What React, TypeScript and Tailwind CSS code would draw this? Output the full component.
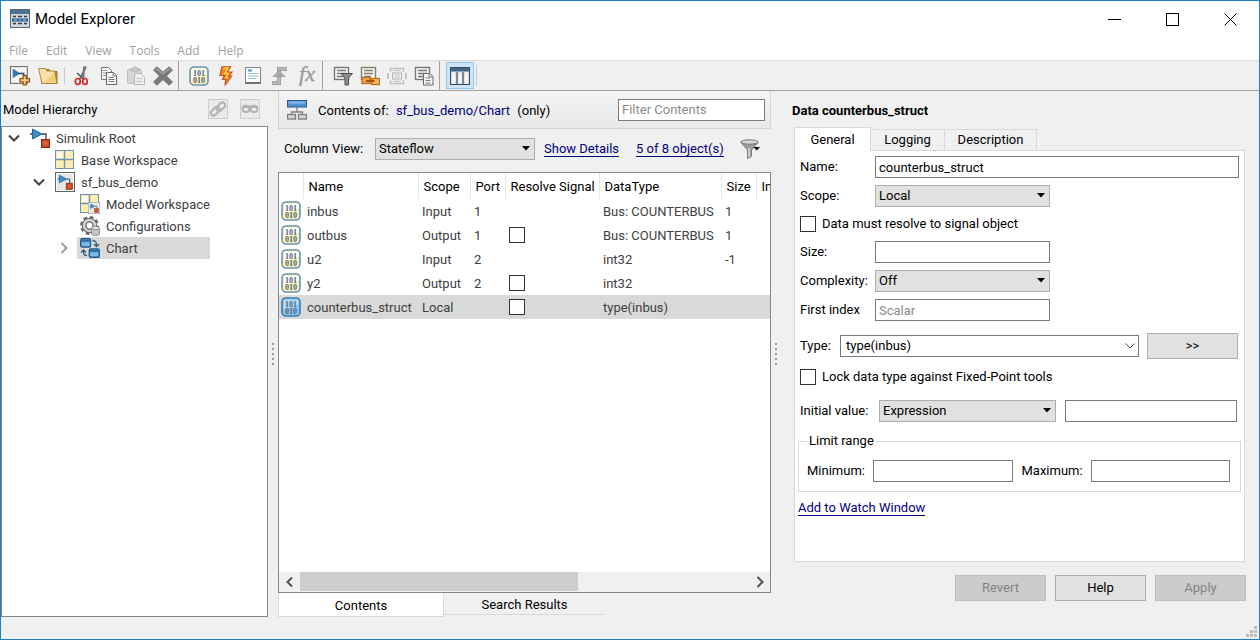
import React, { useState } from "react";

interface IconProps {
  children: React.ReactNode;
  size?: number;
}

const Icon: React.FC<IconProps> = ({ children, size = 20 }) => (
  <svg width={size} height={size} viewBox="0 0 20 20" fill="none" aria-hidden="true" className="shrink-0">
    {children}
  </svg>
);

// Blue gain triangle wired to a red block, shared by all the model icons
const ModelMark = () => (
  <>
    <path d="M0 6h3M12 6h4v6" stroke="#2b4a63" strokeWidth="1.3" />
    <path d="M2.5 1v10L12 6z" fill="#3b8fd0" stroke="#1d5787" strokeWidth="0.9" />
    <rect x="11.5" y="11.5" width="8" height="8" fill="#cc4524" stroke="#8c2c14" />
    <rect x="13.5" y="13.5" width="4" height="4" fill="#e0603a" />
  </>
);

const BoxedModelMark = () => (
  <>
    <rect x="0.5" y="0.5" width="19" height="19" fill="#e6e6e6" stroke="#5f6468" />
    <rect x="1.5" y="1.5" width="17" height="17" stroke="#fafafa" />
    <g transform="translate(2.5 2.5) scale(0.76)">
      <ModelMark />
    </g>
  </>
);

const WorkspaceMark = () => (
  <>
    <rect x="0.5" y="0.5" width="18" height="18" fill="#fbeeb0" stroke="#6f93b4" />
    <path d="M2 2h6v6H2z" fill="#fffbe6" />
    <path d="M9.5 1v17M1 9.5h17" stroke="#6f93b4" strokeWidth="1.4" />
  </>
);

const DataIcon: React.FC<{ selected?: boolean }> = ({ selected }) => (
  <Icon>
    <rect x="1" y="1" width="18" height="18" rx="4" fill={selected ? "#8cc4e8" : "#fbf0b4"} stroke={selected ? "#3b7db2" : "#6c93b8"} strokeWidth="1.6" />
    <path d="M2.500 4.500q0-2 2-2h11q2 0 2 2v3l-15 5z" fill={selected ? "#b4dcf3" : "#fffef8"} />
    <text x="10" y="9.500" textAnchor="middle" fontFamily="Liberation Serif, serif" fontWeight="700" fontSize="8" fill="#4d6780">101</text>
    <text x="10" y="16.500" textAnchor="middle" fontFamily="Liberation Serif, serif" fontWeight="700" fontSize="8" fill="#4d6780">010</text>
  </Icon>
);

const AppIcon = () => (
  <Icon>
    <rect x="0.5" y="0.5" width="19" height="18" fill="#cfd6dc" stroke="#5b6670" />
    <rect x="1" y="1" width="18" height="4" fill="#4f7396" />
    <path d="M3 7.5h3M8 7.5h4M14 7.5h3M3 14.5h3M8 14.5h4M14 14.5h3" stroke="#333b42" strokeWidth="1.6" />
    <rect x="2" y="9.5" width="16" height="3" fill="#2f5f93" />
    <path d="M4 11h3M9 11h2M13 11h3" stroke="#a9d0f2" strokeWidth="1" />
  </Icon>
);

const NewModelIcon = () => (
  <Icon size={21}>
    <rect x="0.5" y="1.5" width="16" height="16" fill="#f5f5f5" stroke="#6b6b6b" />
    <path d="M3 4v8l6-4z" fill="#2f7fbf" stroke="#1d5787" strokeWidth="0.6" />
    <path d="M8 8h5v4" stroke="#2b4a63" strokeWidth="1.4" />
    <path d="M12.500 10h3v3h3v3h-3v3h-3v-3h-3v-3h3z" fill="#f8d08c" stroke="#8f5218" strokeWidth="1.200" />
  </Icon>
);

const FolderIcon = () => (
  <Icon>
    <path d="M4 17.500V5.500l1-2h6l1.500 2h6.500v12z" fill="#c7994a" stroke="#8a6526" strokeWidth="0.9" />
    <path d="M4 17.500L0.600 2.500h7l1.200 2.500h7.700l2.500 12.500z" fill="#fae2a4" stroke="#a97b2a" strokeWidth="0.9" />
    <path d="M6 16.500l10-9.500 2 9.500z" fill="#f3cd78" />
  </Icon>
);

const CutIcon = () => (
  <Icon>
    <path d="M14 .5L8 13M12 .5L11.500 12" stroke="#75797d" strokeWidth="2" />
    <path d="M5 7l7 6.500" stroke="#55595d" strokeWidth="1.600" />
    <ellipse cx="5.800" cy="15.500" rx="2.500" ry="3" stroke="#cf2a2a" strokeWidth="1.700" />
    <ellipse cx="13" cy="15.500" rx="2.300" ry="3" stroke="#cf2a2a" strokeWidth="1.700" />
  </Icon>
);

const CopyIcon = () => (
  <Icon>
    <path d="M2.500 1.500h7l3 3v9h-10z" fill="#f4f4f4" stroke="#777" />
    <path d="M4 4.500h4M4 7h6M4 9.500h6" stroke="#999" />
    <path d="M7.500 6.500h7l3 3v9h-10z" fill="#fafafa" stroke="#666" />
    <path d="M14 6.500V10h3.500M9.500 11.500h5M9.500 13.500h6M9.500 15.500h6" stroke="#777" />
  </Icon>
);

const PasteIcon = () => (
  <Icon>
    <rect x="1.500" y="3.500" width="14" height="14" rx="1" fill="#d6d6d6" stroke="#bcbcbc" />
    <path d="M5 5V2.500h2L8 1h2l1 1.500h2V5z" fill="#c9c9c9" stroke="#b2b2b2" />
    <path d="M8.500 7.500h6l4 3.500v7.500h-10z" fill="#f0f0f0" stroke="#b5b5b5" />
    <path d="M10.500 12.500h6M10.500 15.500h6" stroke="#c4c4c4" />
  </Icon>
);

const DeleteIcon = () => (
  <Icon>
    <path d="M0.500 4L4 .8l6 5.400L16 .8 19.500 4l-6 6 6 6-3.500 3.200-6-5.600-6 5.600L.5 16l6-6z" fill="#77797b" stroke="#5c5e60" strokeWidth="0.7" />
    <path d="M2.500 4L4 2.700l6 5.300 6-5.300L17.500 4" stroke="#a5a8aa" strokeWidth="1.200" />
  </Icon>
);

const EventIcon = () => (
  <Icon>
    <path d="M6 .8h8.500l-3 5.200H16l-3 4h2.500L9 19.500l.8-6H6.500L8.500 9.500H4z" fill="#f48b22" stroke="#cf4b1e" strokeWidth="1.200" />
    <path d="M7.500 2h4.500l-3 5.500h3.500l-2.500 4h2" stroke="#fdd04e" strokeWidth="1.500" />
  </Icon>
);

const MessageIcon = () => (
  <Icon>
    <rect x="2.500" y="1.500" width="15" height="15" fill="#fbfbfb" stroke="#86898c" />
    <path d="M2 17h16" stroke="#707477" strokeWidth="2" />
    <path d="M5 4.500h4" stroke="#2f9bd6" strokeWidth="1.800" />
    <path d="M5 7.500h10M5 10h10M5 12.500h8" stroke="#8bc0df" strokeWidth="1.200" />
  </Icon>
);

const TriggerIcon = () => (
  <Icon>
    <path d="M2 17h7V3h8" stroke="#9f9f9f" strokeWidth="4" />
    <path d="M2 17h7V3h8" stroke="#b9b9b9" strokeWidth="2" />
    <path d="M9 4.500L3 10.500h12z" fill="#a9a9a9" stroke="#999" strokeWidth="0.800" />
  </Icon>
);

const FxIcon = () => (
  <Icon>
    <text x="10" y="15" textAnchor="middle" fontFamily="Liberation Serif, serif" fontStyle="italic" fontSize="22" fill="#9c9c9c" stroke="#9c9c9c" strokeWidth="0.400">fx</text>
  </Icon>
);

const SheetLines = ({ stroke }: { stroke: string }) => (
  <>
    <rect x="1.500" y="1.500" width="14" height="12" fill="#f7f7f7" stroke={stroke} strokeWidth="1.400" />
    <path d="M4 4.500h9M4 7.500h9M4 10.500h7" stroke={stroke} strokeWidth="1.400" />
  </>
);

const FilterRowsIcon = () => (
  <Icon>
    <SheetLines stroke="#777" />
    <path d="M8 7.500h11.500L15.500 12v7h-3.500v-7z" fill="#8c8f91" stroke="#4c4f51" />
  </Icon>
);

const LinkedRowsIcon = () => (
  <Icon>
    <SheetLines stroke="#887c6c" />
    <rect x="2" y="11.500" width="8" height="6" fill="#f0a44a" stroke="#bf6d17" strokeWidth="1.300" />
    <rect x="11.500" y="12.500" width="8" height="6" fill="#f6b765" stroke="#bf6d17" strokeWidth="1.300" />
    <path d="M6 15h8.500" stroke="#94500d" strokeWidth="1.800" />
  </Icon>
);

const RefreshRowsIcon = () => (
  <Icon>
    <path d="M3.500 6V2.500h13V6M3.500 14v3.500h13V14" stroke="#c0c0c0" strokeWidth="1.400" />
    <rect x="5.500" y="7" width="9" height="6" fill="#f4f4f4" stroke="#b4b4b4" />
    <path d="M7 9h6M7 11h6M6 4.700h8M6 15.300h8" stroke="#c4c4c4" />
    <path d="M1 7v6M19 7v6" stroke="#b9b9b9" strokeWidth="1.600" />
  </Icon>
);

const CopyRowsIcon = () => (
  <Icon>
    <SheetLines stroke="#777" />
    <path d="M9.500 7.500h6l3.500 3v8.500H9.500z" fill="#fbfbfb" stroke="#686868" />
    <path d="M11.500 12h5M11.500 14.500h5M11.500 17h5M15 7.500v3.500h4" stroke="#777" />
  </Icon>
);

const DialogViewIcon = () => (
  <Icon>
    <rect x="0.500" y="1.500" width="19" height="17" fill="#dfe3e6" stroke="#3d4b57" />
    <rect x="1" y="2" width="18" height="3.500" fill="#3f678f" />
    <path d="M7 6v12M13 6v12" stroke="#56626d" strokeWidth="1.400" />
    <path d="M2.500 7h2.500v10H2.500zM9 7h2.500v10H9zM15 7h2.500v10H15z" fill="#f6f8fa" />
  </Icon>
);

const LinkIcon = () => (
  <Icon size={18}>
    <g transform="rotate(-45 10 10)" stroke="#b4b4b4" strokeWidth="2.400">
      <rect x="0.500" y="6.500" width="11" height="6" rx="3" />
      <rect x="8.500" y="7.500" width="11" height="6" rx="3" />
    </g>
  </Icon>
);

const MaskIcon = () => (
  <Icon size={18}>
    <path d="M0.500 9.500c0-4.500 4-5.500 9.500-3C15.500 4 19.500 5 19.500 9.500c0 5.500-6.500 6.500-9.500 3C7 16 .5 15 .5 9.500z" fill="#b2b2b2" />
    <ellipse cx="5.500" cy="10.300" rx="2.800" ry="1.800" fill="#efefef" />
    <ellipse cx="14.500" cy="10.300" rx="2.800" ry="1.800" fill="#efefef" />
  </Icon>
);

const HierarchyIcon = () => (
  <Icon>
    <rect x="0.500" y="0.500" width="19" height="6.500" fill="#4a92d0" stroke="#2b5f90" />
    <rect x="1.500" y="1.500" width="17" height="2" fill="#86bde8" />
    <path d="M10 7v5M4.500 15v-3h11v3" stroke="#808080" strokeWidth="1.300" />
    <rect x="0.500" y="14.500" width="8" height="4.500" fill="#d6d6d6" stroke="#7b7b7b" strokeWidth="1.300" />
    <rect x="11.500" y="14.500" width="8" height="4.500" fill="#d6d6d6" stroke="#7b7b7b" strokeWidth="1.300" />
  </Icon>
);

const FunnelIcon = () => (
  <Icon>
    <path d="M1 3.500l6.500 7.500v8.500l4-2V11L18 3.500z" fill="#9c9c9c" stroke="#7c7c7c" />
    <path d="M9 9v9" stroke="#e0e0e0" strokeWidth="1.500" />
    <ellipse cx="9.500" cy="3" rx="8.700" ry="2.200" fill="#d4d4d4" stroke="#777" />
    <path d="M13.500 8h6.500l-3.250 3.500z" fill="#000" />
  </Icon>
);

const GearIcon = () => (
  <Icon>
    <circle cx="9.500" cy="9.500" r="7.700" stroke="#6a6a6a" strokeWidth="3.400" strokeDasharray="3.400 2.650" />
    <circle cx="9.500" cy="9.500" r="5.300" stroke="#666" strokeWidth="4.800" />
    <circle cx="9.500" cy="9.500" r="5.500" stroke="#d2d2d2" strokeWidth="2.600" />
    <path d="M11.500 12v6c0 2 8 2 8 0v-6z" fill="#c5c5c5" stroke="#808080" strokeWidth="0.800" />
    <ellipse cx="15.500" cy="12" rx="4" ry="1.600" fill="#e9e9e9" stroke="#808080" strokeWidth="0.800" />
  </Icon>
);

const ChartIcon = () => (
  <Icon>
    <rect x="0.700" y="0.700" width="9.800" height="8.300" rx="1.500" fill="#78b8ea" stroke="#235884" strokeWidth="1.400" />
    <path d="M1.500 2.800h8.200" stroke="#2b6ba3" strokeWidth="2" />
    <rect x="9.300" y="11" width="10" height="8.300" rx="1.500" fill="#78b8ea" stroke="#235884" strokeWidth="1.400" />
    <path d="M10.200 13.100h8.200" stroke="#2b6ba3" strokeWidth="2" />
    <path d="M12.500 2.500c3 0 4 1 4 5M14 6l2.500 2.500L19 6M7 17.500c-3 0-3.500-1-3.500-5M1 14.500L3.500 12 6 14.500" stroke="#3b5a77" strokeWidth="1.400" />
  </Icon>
);

const Chevron: React.FC<{ dir: "down" | "right" | "left" }> = ({ dir }) => (
  <svg width="12" height="12" viewBox="0 0 12 12" fill="none" stroke="currentColor" strokeWidth="2" aria-hidden="true">
    {dir === "down" && <path d="M1 3.500l5 5 5-5" />}
    {dir === "right" && <path d="M3.500 1l5 5-5 5" />}
    {dir === "left" && <path d="M8 1.500L3.500 6 8 10.500" />}
  </svg>
);

const menus = ["File", "Edit", "View", "Tools", "Add", "Help"];

interface Tool {
  label: string;
  icon: React.ReactNode;
}

const fileTools: Tool[] = [
  { label: "New model", icon: <NewModelIcon /> },
  { label: "Open", icon: <FolderIcon /> },
];

const editTools: Tool[] = [
  { label: "Cut", icon: <CutIcon /> },
  { label: "Copy", icon: <CopyIcon /> },
  { label: "Paste", icon: <PasteIcon /> },
  { label: "Delete", icon: <DeleteIcon /> },
];

const addTools: Tool[] = [
  { label: "Add data", icon: <DataIcon /> },
  { label: "Add event", icon: <EventIcon /> },
  { label: "Add message", icon: <MessageIcon /> },
  { label: "Add trigger", icon: <TriggerIcon /> },
  { label: "Add function", icon: <FxIcon /> },
];

const viewTools: Tool[] = [
  { label: "Filter rows", icon: <FilterRowsIcon /> },
  { label: "Show linked rows", icon: <LinkedRowsIcon /> },
  { label: "Refresh rows", icon: <RefreshRowsIcon /> },
  { label: "Copy rows", icon: <CopyRowsIcon /> },
];

const ToolGroup: React.FC<{ tools: Tool[] }> = ({ tools }) => (
  <div className="flex items-center">
    {tools.map((tool) => (
      <button key={tool.label} type="button" aria-label={tool.label} className="flex h-7 w-[27px] items-center justify-center">
        {tool.icon}
      </button>
    ))}
  </div>
);

interface TreeItem {
  label: string;
  indent: string;
  icon: React.ReactNode;
  state?: "open" | "closed";
  selected?: boolean;
}

const treeItems: TreeItem[] = [
  { label: "Simulink Root", indent: "", icon: <Icon><ModelMark /></Icon>, state: "open" },
  { label: "Base Workspace", indent: "pl-[25px]", icon: <Icon><WorkspaceMark /></Icon> },
  { label: "sf_bus_demo", indent: "pl-[25px]", icon: <Icon><BoxedModelMark /></Icon>, state: "open" },
  {
    label: "Model Workspace",
    indent: "pl-[50px]",
    icon: (
      <Icon>
        <WorkspaceMark />
        <g transform="translate(8 8) scale(0.6)">
          <BoxedModelMark />
        </g>
      </Icon>
    ),
  },
  { label: "Configurations", indent: "pl-[50px]", icon: <GearIcon /> },
  { label: "Chart", indent: "pl-[50px]", icon: <ChartIcon />, state: "closed", selected: true },
];

interface DataRow {
  name: string;
  scope: string;
  port: string;
  resolve: boolean;
  dataType: string;
  size: string;
}

const rows: DataRow[] = [
  { name: "inbus", scope: "Input", port: "1", resolve: false, dataType: "Bus: COUNTERBUS", size: "1" },
  { name: "outbus", scope: "Output", port: "1", resolve: true, dataType: "Bus: COUNTERBUS", size: "1" },
  { name: "u2", scope: "Input", port: "2", resolve: false, dataType: "int32", size: "-1" },
  { name: "y2", scope: "Output", port: "2", resolve: true, dataType: "int32", size: "" },
  { name: "counterbus_struct", scope: "Local", port: "", resolve: true, dataType: "type(inbus)", size: "" },
];

const columns = [
  { label: "", width: "w-6" },
  { label: "Name", width: "w-[115px]" },
  { label: "Scope", width: "w-[52px]" },
  { label: "Port", width: "w-[35px]" },
  { label: "Resolve Signal", width: "w-[94px]" },
  { label: "DataType", width: "w-[122px]" },
  { label: "Size", width: "w-[35px]" },
  { label: "InitialValue", width: "w-[120px]" },
];

const checkboxClass = "size-4 shrink-0 appearance-none border border-[#333] bg-white checked:bg-[#333]";
const inputClass = "h-[22px] min-w-0 border border-[#7a7a7a] bg-white px-[3px] outline-none placeholder:text-[#8c8c8c]";
const buttonClass = "h-[26px] w-[91px] shrink-0 border border-[#adadad] bg-[#e1e1e1] disabled:border-[#bfbfbf] disabled:bg-[#cccccc] disabled:text-[#838383]";
const linkClass = "border-b border-[#00007f] leading-[15px] text-[#00007f]";
const cellClass = "p-0 pt-0.5 pl-1 whitespace-nowrap";

interface DropdownProps {
  id: string;
  options: string[];
  className: string;
}

const Dropdown: React.FC<DropdownProps> = ({ id, options, className }) => (
  <div className={`relative ${className}`}>
    <select id={id} className="block h-[22px] w-full appearance-none border border-[#adadad] bg-[#e1e1e1] px-[3px] outline-none">
      {options.map((option) => (
        <option key={option}>{option}</option>
      ))}
    </select>
    <svg width="8" height="5" viewBox="0 0 8 5" aria-hidden="true" className="pointer-events-none absolute top-2 right-[5px]">
      <path d="M0 0h8L4 4.500z" fill="#000" />
    </svg>
  </div>
);

const Splitter = () => (
  <div className="flex w-[10px] shrink-0 cursor-col-resize flex-col items-center justify-center gap-[3px]">
    {[0, 1, 2, 3, 4].map((dot) => (
      <span key={dot} className="size-0.5 bg-[#9a9a9a]" />
    ))}
  </div>
);

const HierarchyPanel = () => (
  <aside className="flex w-[267px] shrink-0 flex-col">
    <header className="flex h-[35px] items-center gap-3 pr-2 pl-0.5">
      <h2 className="flex-1 pt-0.5">Model Hierarchy</h2>
      <button type="button" disabled aria-label="Show linked" className="flex size-5 items-center justify-center border border-[#cdcdcd] bg-[#eaeaea]">
        <LinkIcon />
      </button>
      <button type="button" disabled aria-label="Show masked" className="flex size-5 items-center justify-center border border-[#cdcdcd] bg-[#eaeaea]">
        <MaskIcon />
      </button>
    </header>
    <ul className="flex-1 border border-[#828790] bg-white text-[#404040]">
      {treeItems.map((item) => (
        <li key={item.label} className={`flex h-[22px] items-center ${item.indent}`}>
          <span className="flex w-[25px] justify-center pr-0.5">
            {item.state && (
              <button type="button" aria-label={`Toggle ${item.label}`} className={item.state === "open" ? "text-[#404040]" : "text-[#9c9c9c]"}>
                <Chevron dir={item.state === "open" ? "down" : "right"} />
              </button>
            )}
          </span>
          <span className={`flex h-full items-center gap-1.5 px-[3px] ${item.selected ? "w-[133px] bg-[#d9d9d9]" : ""}`}>
            {item.icon}
            <span className="pt-0.5">{item.label}</span>
          </span>
        </li>
      ))}
    </ul>
  </aside>
);

const ContentsPanel = () => {
  const [filter, setFilter] = useState("");

  return (
    <section className="flex min-w-0 flex-1 flex-col">
      <header className="flex h-[38px] items-center border border-t-0 border-[#d4d4d4] bg-linear-to-b from-[#f4f4f4] to-[#e8e8e8] pr-[5px] pl-2">
        <HierarchyIcon />
        <p className="flex-1 pt-0.5 pl-[11px] whitespace-pre">
          Contents of: <span className="pl-1 text-[#00007f]">sf_bus_demo/Chart</span> <span className="pl-1">(only)</span>
        </p>
        <input
          type="text"
          aria-label="Filter Contents"
          placeholder="Filter Contents"
          value={filter}
          onChange={(e) => setFilter(e.target.value)}
          className={`${inputClass} w-[147px]`}
        />
      </header>

      <div className="flex h-[43px] items-center pb-1 pl-1.5">
        <label htmlFor="column-view" className="w-[91px]">Column View:</label>
        <Dropdown id="column-view" options={["Stateflow", "Default"]} className="w-[160px]" />
        <a href="#details" className={`ml-[9px] ${linkClass}`}>Show Details</a>
        <a href="#objects" className={`ml-[17px] ${linkClass}`}>5 of 8 object(s)</a>
        <button type="button" aria-label="Row filter" className="ml-4">
          <FunnelIcon />
        </button>
      </div>

      <div className="flex flex-1 flex-col overflow-hidden border border-[#828790] bg-white">
        <div className="flex-1 overflow-hidden">
          <table className="w-[798px] table-fixed border-collapse text-left">
            <thead>
              <tr className="h-[26px]">
                {columns.map((col) => (
                  <th key={col.label} className={`border-r border-[#e5e5e5] p-0 pt-0.5 pl-[5px] font-normal whitespace-nowrap ${col.width}`}>
                    {col.label}
                  </th>
                ))}
                <th className="p-0" />
              </tr>
            </thead>
            <tbody className="text-[#404040]">
              {rows.map((row, idx) => {
                const selected = idx === rows.length - 1;
                return (
                  <tr key={row.name} className={selected ? "h-6 bg-[#d9d9d9]" : "h-6"}>
                    <td className="p-0 pl-0.5">
                      <DataIcon selected={selected} />
                    </td>
                    <td className={cellClass}>{row.name}</td>
                    <td className={cellClass}>{row.scope}</td>
                    <td className={cellClass}>{row.port}</td>
                    <td className="p-0 pl-1">
                      {row.resolve && <input type="checkbox" aria-label={`Resolve ${row.name}`} className={`block ${checkboxClass}`} />}
                    </td>
                    <td className={cellClass}>{row.dataType}</td>
                    <td className={cellClass}>{row.size}</td>
                    <td className="p-0" />
                    <td className="p-0" />
                  </tr>
                );
              })}
            </tbody>
          </table>
        </div>
        <div className="flex h-5 items-center bg-[#f0f0f0] text-[#505050]">
          <button type="button" aria-label="Scroll left" className="flex w-[21px] justify-center">
            <Chevron dir="left" />
          </button>
          <div className="h-full flex-1 pb-px">
            <div className="h-full w-[62%] bg-[#cdcdcd]" />
          </div>
          <button type="button" aria-label="Scroll right" className="flex w-[21px] justify-center">
            <Chevron dir="right" />
          </button>
        </div>
      </div>

      <div className="flex h-6 items-start">
        <button type="button" className="h-6 w-[166px] border border-t-0 border-[#d9d9d9] bg-white pt-0.5">Contents</button>
        <button type="button" className="h-[22px] w-[161px] border-b border-[#d9d9d9] pt-0.5">Search Results</button>
      </div>
    </section>
  );
};

const PropertiesPanel = () => {
  const [name, setName] = useState("counterbus_struct");
  const [size, setSize] = useState("");
  const [firstIndex, setFirstIndex] = useState("");

  return (
    <section className="flex w-[478px] shrink-0 flex-col pr-[13px] pb-4 pl-[11px]">
      <h2 className="flex h-9 items-center pt-1 font-bold">Data counterbus_struct</h2>

      <div className="flex h-[23px] items-end pl-0.5">
        <button type="button" className="relative -mb-px h-6 w-[77px] border border-b-0 border-[#d9d9d9] bg-white">General</button>
        <button type="button" className="h-[21px] w-[74px] border border-b-0 border-l-0 border-[#d9d9d9]">Logging</button>
        <button type="button" className="h-[21px] w-[92px] border border-b-0 border-l-0 border-[#d9d9d9]">Description</button>
      </div>

      <div className="mr-px ml-0.5 flex flex-1 flex-col border border-[#d9d9d9] bg-white px-[3px] pt-[5px]">
        <div className="flex flex-col gap-[7px] pl-0.5">
          <div className="flex items-center">
            <label htmlFor="name" className="w-[75px]">Name:</label>
            <input id="name" type="text" value={name} onChange={(e) => setName(e.target.value)} className={`${inputClass} mr-0.5 flex-1`} />
          </div>
          <div className="flex items-center">
            <label htmlFor="scope" className="w-[75px]">Scope:</label>
            <Dropdown id="scope" options={["Local", "Input", "Output"]} className="w-[175px]" />
          </div>
          <label className="flex h-5 items-center gap-1.5">
            <input type="checkbox" className={checkboxClass} />
            Data must resolve to signal object
          </label>
          <div className="flex items-center">
            <label htmlFor="size" className="w-[75px]">Size:</label>
            <input id="size" type="text" value={size} onChange={(e) => setSize(e.target.value)} className={`${inputClass} w-[175px]`} />
          </div>
          <div className="flex items-center">
            <label htmlFor="complexity" className="w-[75px]">Complexity:</label>
            <Dropdown id="complexity" options={["Off", "On"]} className="w-[175px]" />
          </div>
          <div className="flex items-center">
            <label htmlFor="first-index" className="w-[75px]">First index</label>
            <input
              id="first-index"
              type="text"
              placeholder="Scalar"
              value={firstIndex}
              onChange={(e) => setFirstIndex(e.target.value)}
              className={`${inputClass} w-[175px]`}
            />
          </div>
        </div>

        <div className="mt-3 flex flex-col gap-2 pl-0.5">
          <div className="flex items-center">
            <label htmlFor="type" className="w-10">Type:</label>
            <div className="relative mr-2 flex-1">
              <select id="type" className="block h-[22px] w-full appearance-none border border-[#7a7a7a] bg-white px-[5px] outline-none">
                <option>type(inbus)</option>
                <option>int32</option>
                <option>double</option>
              </select>
              <svg width="10" height="6" viewBox="0 0 10 6" fill="none" stroke="#444" aria-hidden="true" className="pointer-events-none absolute top-2 right-1">
                <path d="M0.500 0.500L5 5l4.500-4.500" />
              </svg>
            </div>
            <button type="button" className={`${buttonClass} mr-[3px]`}>&gt;&gt;</button>
          </div>
          <label className="flex h-5 items-center gap-1.5">
            <input type="checkbox" className={checkboxClass} />
            Lock data type against Fixed-Point tools
          </label>
        </div>

        <div className="mt-[13px] flex items-center pl-0.5">
          <label htmlFor="initial-kind" className="w-[79px]">Initial value:</label>
          <Dropdown id="initial-kind" options={["Expression", "Parameter"]} className="w-[177px]" />
          <input type="text" aria-label="Initial value" className={`${inputClass} mr-1 ml-[9px] flex-1`} />
        </div>

        <fieldset className="mt-[11px] min-w-0 border border-[#d9d9d9] px-2 pb-[9px]">
          <legend className="px-0.5 leading-4">Limit range</legend>
          <div className="flex items-center pt-[11px]">
            <label htmlFor="minimum" className="w-[66px] shrink-0">Minimum:</label>
            <input id="minimum" type="text" className={`${inputClass} flex-1`} />
            <label htmlFor="maximum" className="ml-[9px] w-[69px] shrink-0">Maximum:</label>
            <input id="maximum" type="text" className={`${inputClass} mr-0.5 flex-1`} />
          </div>
        </fieldset>

        <a href="#watch" className={`mt-2 self-start ${linkClass}`}>Add to Watch Window</a>
      </div>

      <footer className="mt-[13px] flex justify-end gap-[9px]">
        <button type="button" disabled className={buttonClass}>Revert</button>
        <button type="button" className={buttonClass}>Help</button>
        <button type="button" disabled className={buttonClass}>Apply</button>
      </footer>
    </section>
  );
};

const App = () => {
  return (
    <div className="flex h-screen flex-col overflow-hidden border border-[#1a80cc] bg-[#f0f0f0] font-['Roboto',sans-serif] text-[13px] leading-4 text-black">
      <header className="flex h-9 items-center bg-white pl-[9px]">
        <AppIcon />
        <h1 className="flex-1 pl-[5px] text-[15px]">Model Explorer</h1>
        <div className="flex">
          <button type="button" aria-label="Minimize" className="flex h-9 w-[58px] items-center justify-center">
            <svg width="13" height="13" viewBox="0 0 13 13" stroke="#000"><path d="M0 6.500h13" /></svg>
          </button>
          <button type="button" aria-label="Maximize" className="flex h-9 w-[58px] items-center justify-center">
            <svg width="13" height="13" viewBox="0 0 13 13" fill="none" stroke="#000"><rect x="0.500" y="0.500" width="12" height="12" /></svg>
          </button>
          <button type="button" aria-label="Close" className="flex h-9 w-[58px] items-center justify-center">
            <svg width="13" height="13" viewBox="0 0 13 13" stroke="#000"><path d="M0.500 0.500l12 12M12.500 0.500l-12 12" /></svg>
          </button>
        </div>
      </header>

      <nav className="flex h-[23px] items-center gap-[18px] bg-white pt-1 pl-2 font-['Open_Sans',sans-serif] text-[12px] text-[#a0a0a0]">
        {menus.map((menu) => (
          <button key={menu} type="button">{menu}</button>
        ))}
      </nav>

      <div className="flex h-[31px] items-stretch border-t border-b border-t-[#dcdcdc] border-b-[#a0a0a0] pl-1.5">
        <ToolGroup tools={fileTools} />
        <div className="mx-[3px] my-1.5 w-px bg-[#c8c8c8]" />
        <ToolGroup tools={editTools} />
        <div className="mr-1.5 ml-0.5 w-px bg-[#a0a0a0]" />
        <ToolGroup tools={addTools} />
        <div className="mr-1.5 ml-0.5 w-px bg-[#a0a0a0]" />
        <ToolGroup tools={viewTools} />
        <div className="mr-1.5 ml-0.5 w-px bg-[#a0a0a0]" />
        <button type="button" aria-label="Dialog view" className="my-px flex w-7 items-center justify-center border border-[#90c8f0] bg-[#cce4f7]">
          <DialogViewIcon />
        </button>
        <div className="mx-0.5 my-1 w-px bg-[#c8c8c8]" />
      </div>

      <main className="flex min-h-0 flex-1">
        <HierarchyPanel />
        <Splitter />
        <ContentsPanel />
        <Splitter />
        <PropertiesPanel />
      </main>

      <footer className="flex h-[22px] items-end justify-end pr-0.5 pb-0.5">
        <svg width="11" height="11" viewBox="0 0 11 11" fill="#bdbdbd" aria-hidden="true">
          <path d="M8 0h3v3H8zM4 4h3v3H4zM8 4h3v3H8zM0 8h3v3H0zM4 8h3v3H4zM8 8h3v3H8z" />
        </svg>
      </footer>
    </div>
  );
};

export default App;
